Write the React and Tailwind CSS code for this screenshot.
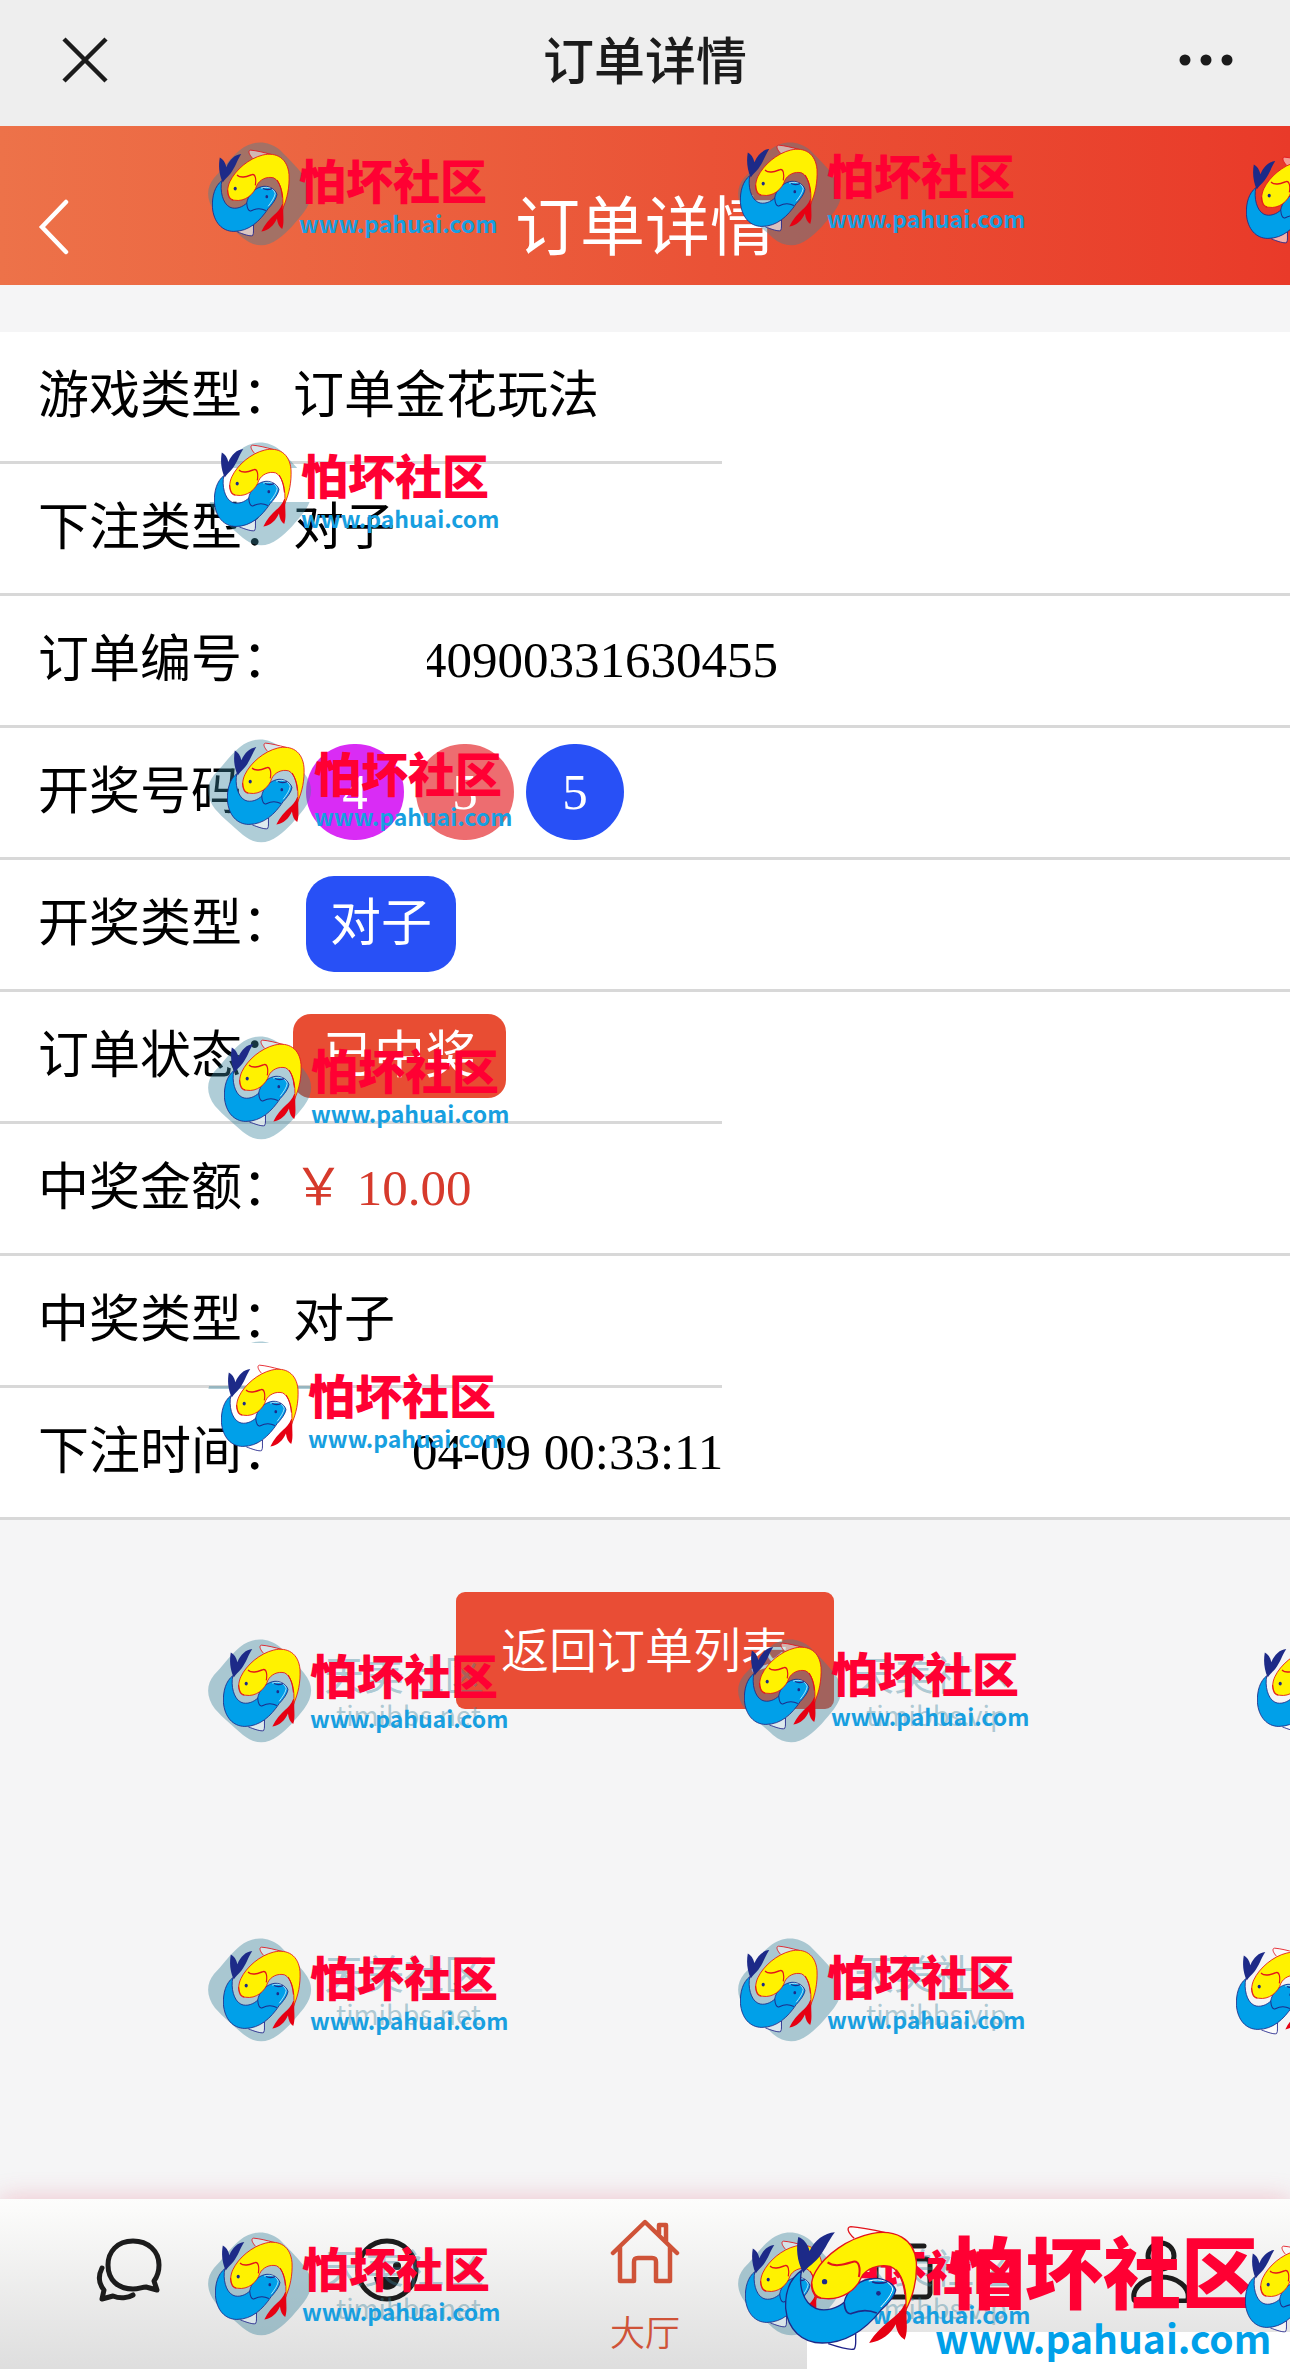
import React from "react";

const CJK = "font-['Noto_Sans_CJK_SC',sans-serif]";

/* Pair of carp, one yellow and one blue */
function Fish({ className }) {
  return (
    <svg className={className} viewBox="0 0 400 378" preserveAspectRatio="none" fill="none" aria-hidden="true">
      <path d="M208 40C188 22 184 6 198 5C228 7 262 14 306 24" fill="#fff" fillOpacity=".5" stroke="#e3131b" strokeWidth="4" />
      <path d="M130 356C160 366 195 376 208 372C216 362 211 344 213 326" fill="#fff" fillOpacity=".6" stroke="#1d2088" strokeWidth="4" />
      <path d="M55 144C35 105 33 70 40 36C56 42 68 56 74 78C90 46 118 24 150 22C128 50 118 82 94 106C78 122 66 128 55 144Z" fill="#1d2a88" />
      <path d="M50 136C15 160 0 200 2 250C8 314 52 354 112 354C190 354 245 310 288 256C308 238 330 215 333 195C325 172 288 154 253 162C215 170 184 200 178 232C160 248 122 262 92 250C54 234 40 180 50 136Z" fill="#00a0e9" stroke="#1d2a88" strokeWidth="4" />
      <path d="M252 168C290 158 320 172 324 192C320 210 305 228 288 246" stroke="#fff" strokeWidth="3" />
      <path d="M178 232C180 260 190 270 202 265C225 255 252 254 276 264M262 170C280 178 296 174 308 170" stroke="#1d2a88" strokeWidth="5" />
      <circle cx="281" cy="205" r="7" fill="#1d2a88" />
      <path d="M360 236C350 258 336 270 318 284C296 302 270 324 253 354C290 350 320 325 333 298C336 320 345 335 360 344C374 310 360 276 368 236Z" fill="#e60012" />
      <path d="M90 212C76 192 78 165 92 140C120 90 190 40 260 26C330 12 388 40 395 110C398 164 386 212 362 258C370 196 352 138 316 124C280 116 244 132 230 156C216 194 170 228 115 220C105 220 95 218 90 212Z" fill="#fff200" stroke="#e3131b" strokeWidth="4" />
      <path d="M128 112C150 128 178 118 205 110C222 106 228 128 222 156" stroke="#e3131b" strokeWidth="6" />
      <path d="M80 176C82 200 90 215 108 219M334 134C350 154 358 178 361 208" stroke="#e3131b" strokeWidth="5" />
      <circle cx="119" cy="170" r="8" fill="#1d2a88" />
    </svg>
  );
}

function Badge({ id, bands = [[0, 104]] }) {
  return (
    <svg className="h-[104px] w-[104px]" viewBox="0 0 104 104" aria-hidden="true">
      <clipPath id={id}>
        {bands.map(([a, b]) => (
          <rect key={a} x="0" y={a} width="104" height={b - a} />
        ))}
      </clipPath>
      <path
        clipPath={`url(#${id})`}
        d="M32 8C44 -2 60 -2 72 8C78 14 88 24 96 34C106 46 105 58 96 70C88 80 80 90 70 97C58 106 46 105 35 96C24 86 16 80 7 70C-2 58 -2 46 6 36C14 28 22 16 32 8Z"
        fill="rgba(55,130,155,0.4)"
      />
    </svg>
  );
}

const badges = [
  { x: 208, y: 142 },
  { x: 738, y: 142 },
  { x: 208, y: 442, bands: [[0, 26], [60, 104]] },
  { x: 208, y: 739 },
  { x: 208, y: 1036 },
  { x: 208, y: 1341, bands: [[0, 2], [45, 48]] },
  { x: 208, y: 1639, name: "timibbs.net" },
  { x: 738, y: 1639, name: "timibbs.vip" },
  { x: 208, y: 1938, name: "timibbs.net" },
  { x: 738, y: 1938, name: "timibbs.vip" },
  { x: 208, y: 2232, name: "timibbs.net" },
  { x: 738, y: 2232, name: "timibbs.vip" },
];

const marks = [
  [212, 149], [740, 144], [1246, 156],
  [214, 444],
  [227, 742],
  [224, 1039],
  [221, 1364],
  [223, 1644], [744, 1642], [1257, 1644],
  [223, 1946], [740, 1945], [1236, 1947],
  [215, 2237], [745, 2240], [1245, 2245],
];

function Watermarks() {
  return (
    <div className="pointer-events-none absolute inset-0 overflow-hidden" aria-hidden="true">
      {badges.map((b) => (
        <div key={`${b.x}-${b.y}`} className="absolute flex whitespace-nowrap" style={{ left: b.x, top: b.y }}>
          <Badge id={`badge-${b.x}-${b.y}`} bands={b.bands} />
          {b.name && (
            <div className={`pt-2 pl-3 text-[#3a829b]/40 ${CJK}`}>
              <div className="text-[40px] leading-[52px]">天美社区</div>
              <div className="pl-3 text-[27px] leading-8">{b.name}</div>
            </div>
          )}
        </div>
      ))}
      <div className="absolute right-0 bottom-0 h-[37px] w-[483px] bg-white" />
      {marks.slice(0, -1).map(([x, y]) => (
        <SmallMark key={`${x}-${y}`} x={x} y={y} />
      ))}
      <div className="absolute bottom-[8px] left-[785px] flex whitespace-nowrap">
        <Fish className="h-[126px] w-[133px] shrink-0" />
        <div className="pl-[17px]">
          <div className={`pl-[12px] text-[78px] leading-[88px] font-black text-[#ff0033] ${CJK}`}>怕坏社区</div>
          <div className={`text-[39px] leading-[48px] font-bold text-[#00a0e9] ${CJK}`}>www.pahuai.com</div>
        </div>
      </div>
      {marks.slice(-1).map(([x, y]) => (
        <SmallMark key={`${x}-${y}`} x={x} y={y} />
      ))}
    </div>
  );
}

function SmallMark({ x, y }) {
  return (
    <div className="absolute flex whitespace-nowrap" style={{ left: x, top: y }}>
      <Fish className="h-[88px] w-[78px] shrink-0" />
      <div className="pl-[9px]">
        <div className={`text-[47px] leading-[60px] font-black text-[#ff0033] ${CJK}`}>怕坏社区</div>
        <div className={`text-[23px] leading-[28px] font-bold text-[#189fe0] ${CJK}`}>www.pahuai.com</div>
      </div>
    </div>
  );
}

function Row({ label, children, short }) {
  return (
    <div>
      <div className="flex h-[129px] items-center pb-[2px] pl-[38px] leading-[60px]">
        <dt>{label}：</dt>
        <dd className="flex items-center">{children}</dd>
      </div>
      <div className={short ? "h-[3px] w-[56%] bg-[#d8d8d8]" : "h-[3px] bg-[#d8d8d8]"} />
    </div>
  );
}

const balls = [
  { n: 4, c: "bg-[#d92cf5]" },
  { n: 5, c: "bg-[#ed6d70]" },
  { n: 5, c: "bg-[#2850f6]" },
];

function NavItem({ label, text, children }) {
  return (
    <a href="#" aria-label={label} className={text ? "flex flex-1 flex-col items-center pt-[20px] text-[#cf5338]" : "flex flex-1 flex-col items-center pt-[38px]"}>
      {children}
      {text && <span className={`mt-[20px] text-[35px] leading-[52px] font-[350] ${CJK}`}>{text}</span>}
    </a>
  );
}

const line = { fill: "none", stroke: "currentColor", strokeLinecap: "round", strokeLinejoin: "round" };

export default function App() {
  return (
    <div className="relative flex min-h-screen flex-col bg-[#f5f5f6] text-[51px] text-black font-['Liberation_Serif','Noto_Sans_CJK_SC',serif]">
      <div className="grid h-[126px] grid-cols-3 items-center bg-[#eeeeee] px-[56px] pb-[6px] text-[#1b1b1b]">
        <button type="button" aria-label="关闭" className="w-[58px]">
          <svg className="h-[58px] w-[58px]" viewBox="0 0 58 58" {...line} strokeLinecap="butt" strokeWidth="4.5" aria-hidden="true">
            <path d="M8 8L50 50M50 8L8 50" />
          </svg>
        </button>
        <div className={`pb-[5px] text-center text-[51px] leading-[60px] font-medium ${CJK}`}>订单详情</div>
        <button type="button" aria-label="更多" className="justify-self-end">
          <svg className="h-[14px] w-[56px]" viewBox="0 0 56 14" fill="currentColor" aria-hidden="true">
            <circle cx="7" cy="7" r="5.5" />
            <circle cx="28" cy="7" r="5.5" />
            <circle cx="49" cy="7" r="5.5" />
          </svg>
        </button>
      </div>

      <header className="grid h-[159px] grid-cols-3 items-center bg-linear-to-r from-[#ed7249] via-[#ea5236] via-55% to-[#e93a29] px-[36px] pt-[42px] text-white">
        <button type="button" aria-label="返回" className="w-[34px]">
          <svg className="h-[56px] w-[34px]" viewBox="0 0 34 56" {...line} strokeLinejoin="miter" strokeWidth="4.5" aria-hidden="true">
            <path d="M30 3L6 28L30 53" />
          </svg>
        </button>
        <h1 className={`pb-[10px] text-center text-[65px] leading-[76px] font-normal whitespace-nowrap ${CJK}`}>订单详情</h1>
      </header>

      <main className="flex flex-col items-center pt-[47px]">
        <dl className="w-full bg-white">
          <Row label="游戏类型" short>订单金花玩法</Row>
          <Row label="下注类型">对子</Row>
          <Row label="订单编号">
            <span className="ml-[134px] overflow-hidden -indent-[6px]">40900331630455</span>
          </Row>
          <Row label="开奖号码">
            <span className="ml-[13px] flex gap-3">
              {balls.map((b, i) => (
                <span key={i} className={`flex h-24 w-[98px] items-center justify-center rounded-full text-white ${b.c}`}>{b.n}</span>
              ))}
            </span>
          </Row>
          <Row label="开奖类型">
            <span className="ml-[13px] rounded-[28px] bg-[#2850f6] px-6 py-[18px] text-white">对子</span>
          </Row>
          <Row label="订单状态" short>
            <span className="rounded-[18px] bg-[#e84d33] px-[30px] py-3 text-white">已中奖</span>
          </Row>
          <Row label="中奖金额">
            <span className="text-[#d63a2c]">￥ 10.00</span>
          </Row>
          <Row label="中奖类型" short>对子</Row>
          <Row label="下注时间">
            <span className="ml-[119px]">04-09 00:33:11</span>
          </Row>
        </dl>
        <button type="button" className={`mt-[72px] rounded-[9px] bg-[#e94d35] px-[45px] pt-[25px] pb-[31px] text-[48px] leading-[61px] font-[350] text-white ${CJK}`}>
          返回订单列表
        </button>
      </main>

      <nav className="mt-auto flex h-[170px] bg-linear-to-b from-[#fdfdfc] to-[#dedede] text-[#1c1c1c] shadow-[0_0_24px_rgba(225,60,95,0.28)]">
        <NavItem label="聊天">
          <svg className="h-[66px] w-[66px]" viewBox="0 0 66 66" {...line} strokeWidth="5" aria-hidden="true">
            <path d="M37 4C21 4 12 15 12 28C12 43 22 52 37 52C43 52 46 50 50 50L61 53L58 44C61 40 63 35 63 28C63 14 52 4 37 4ZM6 31C2 39 3 47 8 53L6 62L17 59C24 62 32 61 37 58" />
          </svg>
        </NavItem>
        <NavItem label="发现">
          <svg className="h-[66px] w-[66px]" viewBox="0 0 66 66" {...line} strokeWidth="5" aria-hidden="true">
            <circle cx="33" cy="33" r="29" />
            <circle cx="23" cy="29" r="4" fill="currentColor" stroke="none" />
            <circle cx="43" cy="29" r="4" fill="currentColor" stroke="none" />
            <path d="M20 40H46C44 57 22 57 20 40Z" fill="currentColor" stroke="none" />
          </svg>
        </NavItem>
        <NavItem label="大厅" text="大厅">
          <svg className="h-[66px] w-[70px]" viewBox="0 0 70 66" {...line} strokeWidth="4.5" aria-hidden="true">
            <path d="M3 34L35 3L67 34M10 28V62H24V43C24 40 25 39 28 39H42C45 39 46 40 46 43V62H60V28M49 15V6H56V22" />
          </svg>
        </NavItem>
        <NavItem label="订单">
          <svg className="h-[66px] w-[66px]" viewBox="0 0 66 66" {...line} strokeWidth="5" aria-hidden="true">
            <path d="M12 9H54" />
            <rect x="6" y="22" width="54" height="38" rx="4" />
          </svg>
        </NavItem>
        <NavItem label="我的">
          <svg className="h-[66px] w-[66px]" viewBox="0 0 66 66" {...line} strokeWidth="5" aria-hidden="true">
            <circle cx="33" cy="19" r="13" />
            <path d="M6 62C4 50 17 40 33 40C49 40 62 50 60 62C60 64 58 64 56 64H10C8 64 6 64 6 62Z" />
          </svg>
        </NavItem>
      </nav>

      <Watermarks />
    </div>
  );
}
